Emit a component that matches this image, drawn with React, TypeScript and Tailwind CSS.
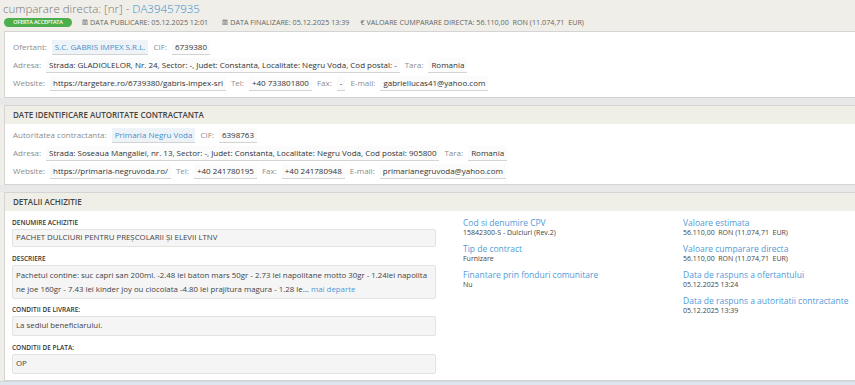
import React from "react";
import { FaCalendarAlt } from "react-icons/fa";

const V = ({ children, link }: { children: React.ReactNode; link?: boolean }) => (
  <span
    className={
      "inline-block px-[3px] leading-[14px] border-b border-[#d3d3d3] " +
      (link ? "text-[#4a90c8] bg-[#eef3f8]" : "text-[#333] bg-[#fbfbfb]")
    }
  >
    {children}
  </span>
);

const L = ({ children }: { children: React.ReactNode }) => (
  <span className="text-[#8c8c8c] mr-[5px]">{children}</span>
);

const Row = ({ children }: { children: React.ReactNode }) => (
  <div className="flex items-center h-[18px] whitespace-nowrap">{children}</div>
);

const Sp = () => <span className="w-[5px] inline-block" />;

const Panel = ({ title, children, className }: { title?: string; children: React.ReactNode; className?: string }) => (
  <div className={"bg-white border border-[#d4d4d4] border-r-0 w-[860px] " + (className || "")}>
    {title && (
      <div className="h-[18px] bg-[#f0efe7] flex items-center px-[8px] text-[8px] font-semibold text-[#444]">
        {title}
      </div>
    )}
    {children}
  </div>
);

const Box = ({ children, className }: { children: React.ReactNode; className?: string }) => (
  <div className={"bg-[#f5f5f5] border border-[#e2e2e2] rounded-[2px] px-[3px] text-[7.85px] text-[#444] " + (className || "")}>
    {children}
  </div>
);

const Lab = ({ children }: { children: React.ReactNode }) => (
  <div className="text-[6.5px] text-[#333] font-semibold uppercase h-[12px] flex items-center">{children}</div>
);

const Info = ({ t, v }: { t: string; v: string }) => (
  <div className="flex flex-col whitespace-pre">
    <div className="text-[8.5px] text-[#4f9bd9] leading-[11px]">{t}</div>
    <div className="text-[7px] text-[#444] leading-[10px]">{v}</div>
  </div>
);

export default function App() {
  return (
    <div
      className="w-[855px] h-[385px] overflow-hidden bg-[#efeee8] text-[#444]"
      style={{ fontFamily: '"Open Sans", "Liberation Sans", sans-serif' }}
    >
      <div className="px-[3px]">
        <div className="text-[11.5px] font-light leading-[15px] text-[#777] pt-[1px]">
          cumparare directa: [nr] - <span className="text-[#3c8fd0]">DA39457935</span>
        </div>
        <div className="flex items-center h-[12px] text-[7.2px] text-[#666] uppercase whitespace-pre">
          <span className="ml-[1px] bg-[#4cae4c] text-white rounded-full h-[9px] w-[68px] flex items-center justify-center text-[5.5px] font-semibold tracking-[-0.2px]">
            OFERTA ACCEPTATA
          </span>
          <span className="ml-[10px] flex items-center gap-[2px]">
            <FaCalendarAlt className="w-[6px] h-[6px] text-[#999]" />DATA PUBLICARE: 05.12.2025 12:01
          </span>
          <span className="ml-[14px] flex items-center gap-[2px]">
            <FaCalendarAlt className="w-[6px] h-[6px] text-[#999]" />DATA FINALIZARE: 05.12.2025 13:39
          </span>
          <span className="ml-[11px]">€ VALOARE CUMPARARE DIRECTA: 56.110,00  RON (11.074,71  EUR)</span>
        </div>
      </div>

      <div className="pl-[4px] mt-[3px] flex flex-col">
        <Panel>
          <div className="px-[8px] pt-[6px] pb-[5px] text-[8px]">
            <Row>
              <L>Ofertant:</L>
              <V link>S.C. GABRIS IMPEX S.R.L.</V>
              <Sp />
              <L>CIF:</L>
              <V>6739380</V>
            </Row>
            <Row>
              <L>Adresa:</L>
              <V>Strada: GLADIOLELOR, Nr. 24, Sector: -, Judet: Constanta, Localitate: Negru Voda, Cod postal: -</V>
              <Sp />
              <L>Tara:</L>
              <V>Romania</V>
            </Row>
            <Row>
              <L>Website:</L>
              <V>https://targetare.ro/6739380/gabris-impex-srl</V>
              <Sp />
              <L>Tel:</L>
              <V>+40 733801800</V>
              <Sp />
              <L>Fax:</L>
              <V>-</V>
              <Sp />
              <L>E-mail:</L>
              <V>gabriellucas41@yahoo.com</V>
            </Row>
          </div>
        </Panel>
        <div className="h-[7px] bg-[#e8e8e8] -ml-[4px]" />

        <Panel title="DATE IDENTIFICARE AUTORITATE CONTRACTANTA">
          <div className="px-[8px] pt-[2px] pb-[4px] text-[8px]">
            <Row>
              <L>Autoritatea contractanta:</L>
              <V link>Primaria Negru Voda</V>
              <Sp />
              <L>CIF:</L>
              <V>6398763</V>
            </Row>
            <Row>
              <L>Adresa:</L>
              <V>Strada: Soseaua Mangaliei, nr. 13, Sector: -, Judet: Constanta, Localitate: Negru Voda, Cod postal: 905800</V>
              <Sp />
              <L>Tara:</L>
              <V>Romania</V>
            </Row>
            <Row>
              <L>Website:</L>
              <V>https://primaria-negruvoda.ro/</V>
              <Sp />
              <L>Tel:</L>
              <V>+40 241780195</V>
              <Sp />
              <L>Fax:</L>
              <V>+40 241780948</V>
              <Sp />
              <L>E-mail:</L>
              <V>primarianegruvoda@yahoo.com</V>
            </Row>
          </div>
        </Panel>
        <div className="h-[7px] bg-[#e8e8e8] -ml-[4px]" />

        <Panel title="DETALII ACHIZITIE" className="h-[189px]">
          <div className="flex">
            <div className="w-[424px] shrink-0 ml-[7px] pt-[6px] flex flex-col">
              <Lab>DENUMIRE ACHIZITIE</Lab>
              <Box className="h-[18px] flex items-center">PACHET DULCIURI PENTRU PREȘCOLARII ȘI ELEVII LTNV</Box>
              <div className="h-[6px]" />
              <Lab>DESCRIERE</Lab>
              <Box className="py-[2px] leading-[14px] whitespace-nowrap overflow-hidden">
                <div>Pachetul contine: suc capri san 200ml. -2.48 lei baton mars 50gr - 2.73 lei napolitane motto 30gr - 1.24lei napolita</div>
                <div>
                  ne joe 160gr - 7.43 lei kinder joy ou ciocolata -4.80 lei prajitura magura - 1.28 le...{" "}
                  <span className="text-[#4f9bd9]">mai departe</span>
                </div>
              </Box>
              <div className="h-[5px]" />
              <Lab>CONDITII DE LIVRARE:</Lab>
              <Box className="h-[20px] flex items-center">La sediul beneficiarului.</Box>
              <div className="h-[6px]" />
              <Lab>CONDITII DE PLATA:</Lab>
              <Box className="h-[20px] flex items-center">OP</Box>
            </div>
            <div className="ml-[27px] w-[220px] shrink-0 pt-[6px] flex flex-col gap-[5px]">
              <Info t="Cod si denumire CPV" v="15842300-S - Dulciuri (Rev.2)" />
              <Info t="Tip de contract" v="Furnizare" />
              <Info t="Finantare prin fonduri comunitare" v="Nu" />
            </div>
            <div className="w-[180px] shrink-0 pt-[6px] flex flex-col gap-[5px]">
              <Info t="Valoare estimata" v="56.110,00  RON (11.074,71  EUR)" />
              <Info t="Valoare cumparare directa" v="56.110,00  RON (11.074,71  EUR)" />
              <Info t="Data de raspuns a ofertantului" v="05.12.2025 13:24" />
              <Info t="Data de raspuns a autoritatii contractante" v="05.12.2025 13:39" />
            </div>
          </div>
        </Panel>
        <div className="h-[6px] bg-[#dfe5ec] -ml-[4px] border-t border-[#cfd7e0]" />
      </div>
    </div>
  );
}
